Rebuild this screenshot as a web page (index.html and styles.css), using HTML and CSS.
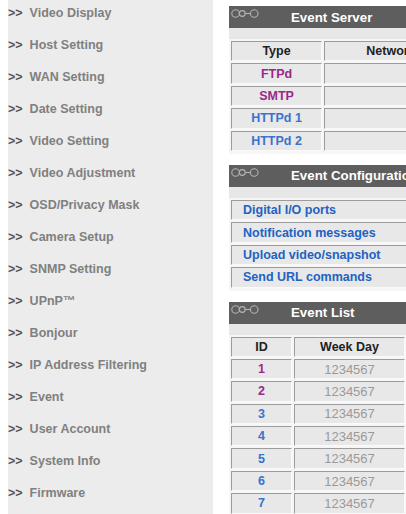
FILE: index.html
```html
<!DOCTYPE html>
<html lang="en">
  <head>
    <meta charset="UTF-8" />
    <meta name="viewport" content="width=device-width, initial-scale=1.0" />
    <title>Event</title>
    <link rel="stylesheet" href="styles.css">
  </head>
  <body>
    <div class="page">
      <ul class="menu">
        <li><a href="#"><span class="arrow">&gt;&gt;</span>Video Display</a></li>
        <li><a href="#"><span class="arrow">&gt;&gt;</span>Host Setting</a></li>
        <li><a href="#"><span class="arrow">&gt;&gt;</span>WAN Setting</a></li>
        <li><a href="#"><span class="arrow">&gt;&gt;</span>Date Setting</a></li>
        <li><a href="#"><span class="arrow">&gt;&gt;</span>Video Setting</a></li>
        <li><a href="#"><span class="arrow">&gt;&gt;</span>Video Adjustment</a></li>
        <li><a href="#"><span class="arrow">&gt;&gt;</span>OSD/Privacy Mask</a></li>
        <li><a href="#"><span class="arrow">&gt;&gt;</span>Camera Setup</a></li>
        <li><a href="#"><span class="arrow">&gt;&gt;</span>SNMP Setting</a></li>
        <li><a href="#"><span class="arrow">&gt;&gt;</span>UPnP™</a></li>
        <li><a href="#"><span class="arrow">&gt;&gt;</span>Bonjour</a></li>
        <li><a href="#"><span class="arrow">&gt;&gt;</span>IP Address Filtering</a></li>
        <li><a href="#"><span class="arrow">&gt;&gt;</span>Event</a></li>
        <li><a href="#"><span class="arrow">&gt;&gt;</span>User Account</a></li>
        <li><a href="#"><span class="arrow">&gt;&gt;</span>System Info</a></li>
        <li><a href="#"><span class="arrow">&gt;&gt;</span>Firmware</a></li>
      </ul>

      <div class="main">
        <!-- Event Server -->
        <div class="panel">
          <div class="panel-head">
            <svg class="chain" viewBox="0 0 28 11" width="28" height="11">
              <circle cx="4.6" cy="5.5" r="3.8" />
              <circle cx="11.3" cy="5.5" r="2.9" />
              <line x1="14.2" y1="5.5" x2="19.4" y2="5.5" />
              <circle cx="23.2" cy="5.5" r="3.8" />
            </svg>
            <span class="panel-title">Event Server</span>
          </div>
          <div class="band"></div>
          <div class="grid server">
            <div class="cell">Type</div><div class="cell">Network</div><div class="cell">Server</div>
            <div class="cell purple">FTPd</div><div class="cell"></div><div class="cell"></div>
            <div class="cell purple">SMTP</div><div class="cell"></div><div class="cell"></div>
            <div class="cell blue">HTTPd 1</div><div class="cell"></div><div class="cell"></div>
            <div class="cell blue">HTTPd 2</div><div class="cell"></div><div class="cell"></div>
          </div>
        </div>

        <!-- Event Configuration -->
        <div class="panel">
          <div class="panel-head">
            <svg class="chain" viewBox="0 0 28 11" width="28" height="11">
              <circle cx="4.6" cy="5.5" r="3.8" />
              <circle cx="11.3" cy="5.5" r="2.9" />
              <line x1="14.2" y1="5.5" x2="19.4" y2="5.5" />
              <circle cx="23.2" cy="5.5" r="3.8" />
            </svg>
            <span class="panel-title">Event Configuration</span>
          </div>
          <div class="band"></div>
          <div class="grid config">
            <a class="cell" href="#">Digital I/O ports</a>
            <a class="cell" href="#">Notification messages</a>
            <a class="cell" href="#">Upload video/snapshot</a>
            <a class="cell" href="#">Send URL commands</a>
          </div>
        </div>

        <!-- Event List -->
        <div class="panel">
          <div class="panel-head">
            <svg class="chain" viewBox="0 0 28 11" width="28" height="11">
              <circle cx="4.6" cy="5.5" r="3.8" />
              <circle cx="11.3" cy="5.5" r="2.9" />
              <line x1="14.2" y1="5.5" x2="19.4" y2="5.5" />
              <circle cx="23.2" cy="5.5" r="3.8" />
            </svg>
            <span class="panel-title">Event List</span>
          </div>
          <div class="band"></div>
          <div class="grid events">
            <div class="cell">ID</div><div class="cell">Week Day</div><div class="cell">Time</div>
            <div class="cell purple">1</div><div class="cell day">1234567</div><div class="cell"></div>
            <div class="cell purple">2</div><div class="cell day">1234567</div><div class="cell"></div>
            <div class="cell blue">3</div><div class="cell day">1234567</div><div class="cell"></div>
            <div class="cell blue">4</div><div class="cell day">1234567</div><div class="cell"></div>
            <div class="cell blue">5</div><div class="cell day">1234567</div><div class="cell"></div>
            <div class="cell blue">6</div><div class="cell day">1234567</div><div class="cell"></div>
            <div class="cell blue">7</div><div class="cell day">1234567</div><div class="cell"></div>
          </div>
        </div>
      </div>
    </div>
  </body>
</html>
```

FILE: styles.css
```css
html,
body {
  margin: 0;
  overflow: hidden;
}

body {
  background: #fff;
  font-family: "Liberation Sans", Arial, sans-serif;
  font-size: 12.5px;
}

.page {
  display: flex;
  align-items: flex-start;
  gap: 16px;
  padding-left: 8px;
}

/* left menu */
.menu {
  flex: none;
  width: 205px;
  min-height: 100vh;
  margin: 0;
  padding: 0;
  list-style: none;
  background: #ececec;
}

.menu li {
  padding: 5px 0 11px;
  line-height: 16px;
  font-weight: bold;
  white-space: nowrap;
}

.menu a {
  color: #808080;
  text-decoration: none;
}

.arrow {
  color: #555;
  margin-right: 7px;
}

/* right column with the boxes */
.main {
  flex: none;
  width: 420px;
  padding-top: 6px;
}

.panel {
  background: #f3f3f3;
  margin-bottom: 11px;
}

.panel-head {
  display: flex;
  align-items: center;
  height: 22px;
  padding-left: 2px;
  background: #5e5e5e;
  color: #fff;
  font-size: 13.3px;
  font-weight: bold;
  white-space: nowrap;
}

.chain {
  flex: none;
  align-self: flex-start;
  margin-top: 2px;
  fill: none;
  stroke: #b4b4b4;
  stroke-width: 1.1;
}

.panel-title {
  margin-left: 32px;
}

.band {
  height: 11px;
  background: #e7e7e7;
}

/* bevelled cells, laid out like an old cellspacing=2 table */
.grid {
  display: grid;
  gap: 2px;
  padding: 2px 2px 3px;
  width: max-content;
  background: #f6f6f6;
}

.cell {
  box-sizing: border-box;
  height: 20.4px;
  display: flex;
  align-items: center;
  justify-content: center;
  border: 1px solid;
  border-color: #9c9c9c #fafafa #fafafa #9c9c9c;
  background: #e8e8e8;
  font-weight: bold;
  color: #222;
  white-space: nowrap;
  overflow: hidden;
}

.purple {
  color: #98288e;
}

.blue {
  color: #3a72cc;
}

.server {
  grid-template-columns: 91px 134px 120px;
}

.config {
  grid-template-columns: 300px;
}

.config .cell {
  justify-content: flex-start;
  padding-left: 11px;
  color: #2262c2;
  text-decoration: none;
}

.events {
  grid-template-columns: 61px 111px 120px;
}

.events .day {
  color: #9a9a9a;
  font-weight: normal;
  font-size: 13px;
}
```
